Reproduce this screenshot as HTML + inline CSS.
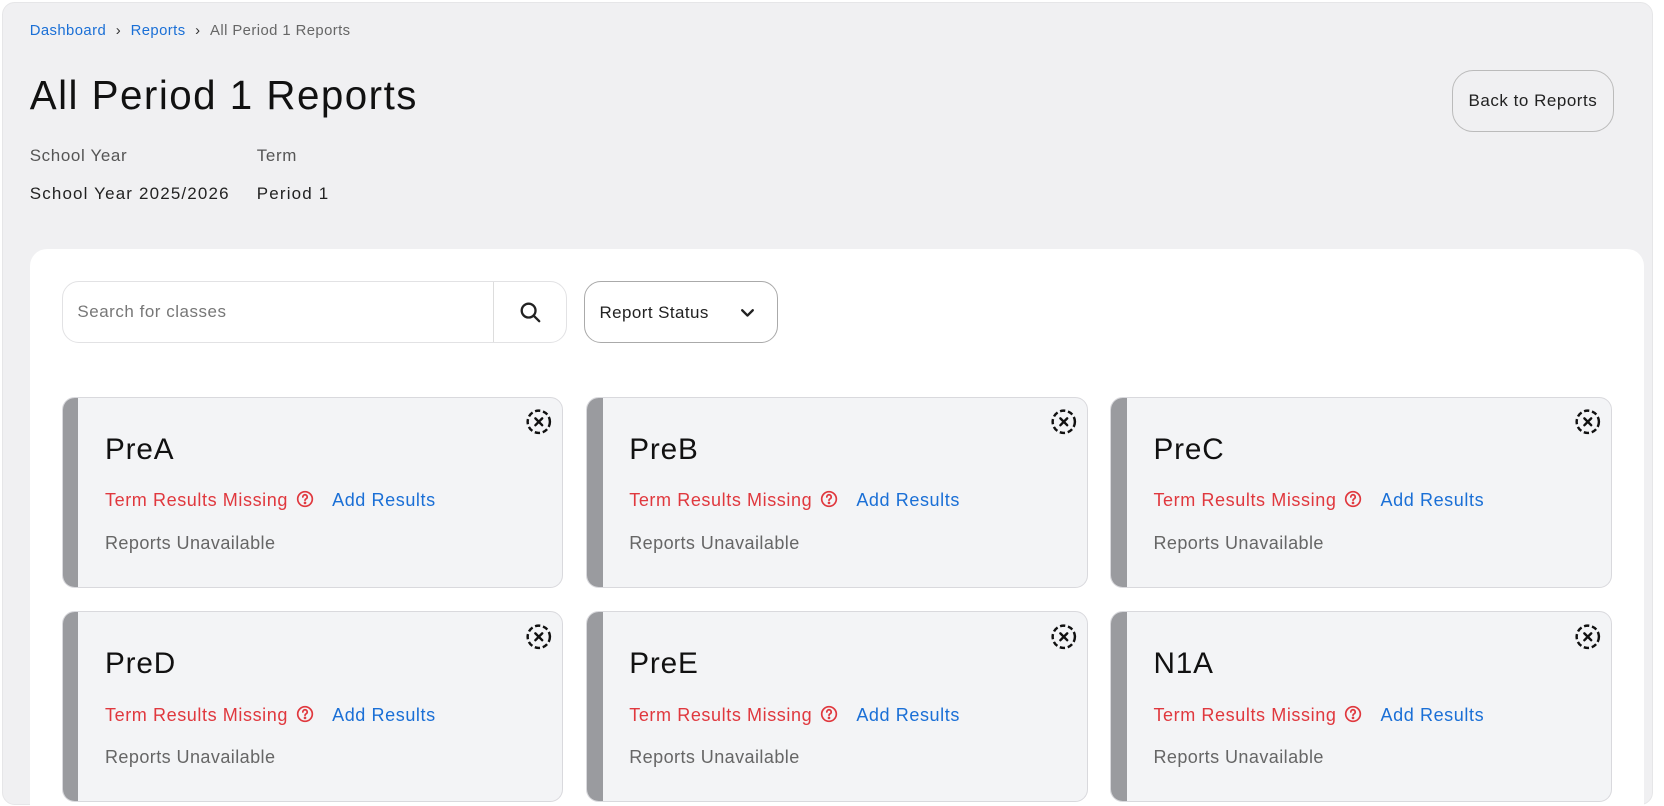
<!DOCTYPE html>
<html><head><meta charset="utf-8"><style>
*{box-sizing:border-box;margin:0;padding:0}
html,body{width:1664px;height:806px;overflow:hidden;background:#fff}
body{font-family:"Liberation Sans",sans-serif}
#w{zoom:1.0612;width:1568px;height:759px;position:relative;overflow:hidden}
.panel{position:absolute;left:2px;top:2px;width:1556px;height:757px;background:#f0f0f2;border-radius:12px;border:1px solid #e6e6e8}
.a{position:absolute;white-space:nowrap}
.bc{top:22px;left:28px;font-size:14px;color:#666;letter-spacing:0.4px}
.bc span.l{color:#1a6fd6}
.bc .s{margin:0 9px;color:#333}
h1{position:absolute;left:28px;top:68px;font-size:38px;font-weight:400;color:#111;letter-spacing:1.4px}
.btn{position:absolute;left:1368px;top:66px;width:153px;height:58px;border:1px solid #bbb;border-radius:20px;font-size:16px;color:#222;display:flex;align-items:center;justify-content:center;letter-spacing:0.5px}
.lbl{font-size:16px;color:#555;top:138px;letter-spacing:0.6px}
.val{font-size:16px;color:#222;top:173px;letter-spacing:1.1px}
.main{position:absolute;left:28px;top:235px;width:1521px;height:524px;background:#fff;border-radius:16px 16px 0 0}
.search{position:absolute;left:58px;top:265px;width:476px;height:58px;border:1px solid #e2e2e4;border-radius:16px}
.search .d{position:absolute;left:406px;top:0;width:1px;height:56px;background:#ddd}
.search .p{position:absolute;left:14px;top:19px;font-size:16px;color:#777;letter-spacing:0.5px}
.rs{position:absolute;left:550px;top:265px;width:183px;height:58px;border:1px solid #aaa;border-radius:16px;font-size:16px;color:#222;letter-spacing:0.4px}
.card{position:absolute;width:473px;height:180px;background:#f3f4f6;border:1px solid #d9d9dd;border-radius:12px;overflow:hidden}
.card .bar{position:absolute;left:0;top:0;width:15px;height:100%;background:#9a9b9f}
.card .t{position:absolute;left:40px;top:33px;font-size:28px;color:#111;letter-spacing:0.8px}
.card .m{position:absolute;left:40px;top:87px;font-size:17px;color:#e0383e;white-space:nowrap;letter-spacing:0.55px}
.card .ar{position:absolute;left:254px;top:87px;font-size:17px;color:#1a6fd6;white-space:nowrap;letter-spacing:0.55px}
.card .ru{position:absolute;left:40px;top:127px;font-size:17px;color:#666;white-space:nowrap;letter-spacing:0.4px}
.card svg.x{position:absolute;right:9px;top:10px}
</style></head><body><div id="w">
<div class="panel"></div>
<div class="a bc"><span class="l">Dashboard</span><span class="s">&#x203A;</span><span class="l">Reports</span><span class="s">&#x203A;</span>All Period 1 Reports</div>
<h1>All Period 1 Reports</h1>
<div class="btn">Back to Reports</div>
<div class="a lbl" style="left:28px">School Year</div>
<div class="a lbl" style="left:242px">Term</div>
<div class="a val" style="left:28px">School Year 2025/2026</div>
<div class="a val" style="left:242px">Period 1</div>
<div class="main"></div>
<div class="search"><div class="p">Search for classes</div><div class="d"></div>
<svg style="position:absolute;left:429px;top:17px" width="24" height="24" viewBox="0 0 24 24" fill="none" stroke="#222" stroke-width="2.2" stroke-linecap="round"><circle cx="10" cy="10" r="6.5"/><path d="M15 15l5 5"/></svg></div>
<div class="rs"><span style="position:absolute;left:14px;top:20px">Report Status</span>
<svg style="position:absolute;left:145px;top:22px" width="16" height="14" viewBox="0 0 16 14" fill="none" stroke="#222" stroke-width="2.2" stroke-linecap="round" stroke-linejoin="round"><path d="M3 4l5 5 5-5"/></svg></div>
<div id="cards"></div>
</div>
<script>
var names=["PreA","PreB","PreC","PreD","PreE","N1A"],xs=[58,552,1046],ys=[374,576],h="";
names.forEach(function(n,i){var x=xs[i%3],y=ys[Math.floor(i/3)];
h+='<div class="card" style="left:'+x+'px;top:'+y+'px"><div class="bar"></div><div class="t">'+n+'</div>'+
'<div class="m">Term Results Missing <svg width="17" height="17" viewBox="0 0 18 18" style="vertical-align:-2px;margin-left:2px" fill="none" stroke="#e0383e" stroke-width="1.7"><circle cx="9" cy="9" r="7.3"/><path d="M6.8 7a2.2 2.2 0 1 1 3 2c-.6.3-.8.7-.8 1.4" stroke-linecap="round"/><circle cx="9" cy="12.9" r=".5" fill="#e0383e"/></svg></div>'+
'<div class="ar">Add Results</div><div class="ru">Reports Unavailable</div>'+
'<svg class="x" width="26" height="26" viewBox="0 0 26 26" fill="none" stroke="#111" stroke-width="2.3"><circle cx="13" cy="13" r="10.5" stroke-dasharray="5 2.6"/><path d="M9.8 9.8l6.4 6.4M16.2 9.8l-6.4 6.4" stroke-linecap="round"/></svg></div>';});
document.getElementById("cards").outerHTML=h;
</script>
</body></html>
